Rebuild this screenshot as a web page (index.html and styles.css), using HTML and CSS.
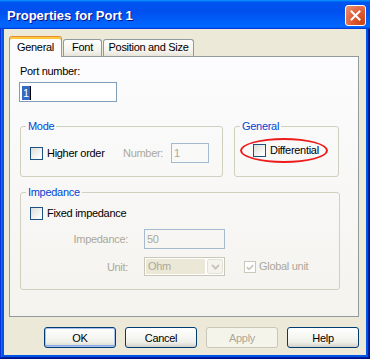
FILE: index.html
```html
<!DOCTYPE html>
<html lang="en">
<head>
    <meta charset="UTF-8">
    <title>Properties for Port 1</title>
    <link rel="stylesheet" href="styles.css">
</head>
<body>
    <div class="window">
        <div class="titlebar">
            <span class="title">Properties for Port 1</span>
            <span class="close">
                <svg width="19" height="19" viewBox="0 0 19 19">
                    <path d="M5.5 5.5 L13.5 13.5 M13.5 5.5 L5.5 13.5" stroke="#fff" stroke-width="2" stroke-linecap="square"/>
                </svg>
            </span>
        </div>

        <div class="client">
            <div class="tabs">
                <div class="tab active">General</div>
                <div class="tab tab-font">Font</div>
                <div class="tab tab-pos">Position and Size</div>
            </div>

            <div class="page">
                <div class="field-label">Port number:</div>
                <div class="edit port"><span class="sel">1</span></div>

                <div class="groups">
                    <fieldset class="group mode">
                        <legend>Mode</legend>
                        <div class="row">
                            <label class="check order"><span class="box"></span>Higher order</label>
                            <span class="muted num-label">Number:</span>
                            <div class="edit disabled num">1</div>
                        </div>
                    </fieldset>

                    <fieldset class="group general">
                        <legend>General</legend>
                        <div class="row diff">
                            <label class="check"><span class="box"></span>Differential</label>
                            <span class="ring"></span>
                        </div>
                    </fieldset>
                </div>

                <fieldset class="group impedance">
                    <legend>Impedance</legend>
                    <label class="check fixed"><span class="box"></span>Fixed impedance</label>
                    <div class="imp-grid">
                        <span class="muted right">Impedance:</span>
                        <div class="edit disabled">50</div>
                        <span></span>

                        <span class="muted right">Unit:</span>
                        <div class="combo">
                            <span class="combo-value">Ohm</span>
                            <span class="combo-btn">
                                <svg width="9" height="6" viewBox="0 0 9 6">
                                    <path d="M1 1 L4.5 4.5 L8 1" fill="none" stroke="#c9c7ba" stroke-width="2"/>
                                </svg>
                            </span>
                        </div>
                        <label class="check disabled global">
                            <span class="box">
                                <svg width="11" height="11" viewBox="0 0 11 11">
                                    <path d="M2 5 L4.5 7.5 L9 3" fill="none" stroke="#c9c7ba" stroke-width="2"/>
                                </svg>
                            </span>Global unit
                        </label>
                    </div>
                </fieldset>
            </div>

            <div class="buttons">
                <button class="btn default">OK</button>
                <button class="btn">Cancel</button>
                <button class="btn" disabled>Apply</button>
                <button class="btn">Help</button>
            </div>
        </div>
    </div>
</body>
</html>
```

FILE: styles.css
```css
body {
    margin: 0;
    font-family: "Liberation Sans", Arial, sans-serif;
    font-size: 11px;
    letter-spacing: -0.3px;
    color: #000;
}
.window {
    width: 370px;
    height: 359px;
    display: flex;
    flex-direction: column;
    background: #0055e5;
    box-shadow: inset -1px -1px #00138c, inset 1px 1px #0831d9, inset -2px -2px #001ea0, inset 2px 2px #166aee;
}
.titlebar {
    height: 29px;
    box-sizing: border-box;
    padding: 5px 4px 0 7px;
    display: flex;
    align-items: flex-start;
    background: linear-gradient(180deg, #0997ff, #0053ee 8%, #0050ee 40%, #0066ff 88%, #0066ff 93%, #005bff 95%, #003dd7 96%, #003dd7);
}
.title {
    font-weight: bold;
    font-size: 13px;
    line-height: 21px;
    letter-spacing: 0;
    color: #fff;
    text-shadow: 1px 1px #0f1089;
}
.close {
    margin-left: auto;
    width: 21px;
    height: 21px;
    box-sizing: border-box;
    border: 1px solid #fff;
    border-radius: 3px;
    background: radial-gradient(circle at 85% 85%, #cc4616 0%, #df5a32 45%, #ee9477 100%);
    display: flex;
}
.client {
    flex: 1;
    margin: 0 4px 4px;
    padding: 7px 7px 7px 5px;
    background: #ece9d8;
    display: flex;
    flex-direction: column;
}

/* tabs */
.tabs {
    height: 20px;
    display: flex;
    align-items: flex-end;
    position: relative;
    z-index: 1;
}
.tab {
    box-sizing: border-box;
    height: 17px;
    padding-top: 1px;
    line-height: 13px;
    text-align: center;
    border: 1px solid #919b9c;
    border-bottom: none;
    border-radius: 3px 3px 0 0;
    background: linear-gradient(#ffffff, #f3f2ec 70%, #e6e4d9);
}
.tab.active {
    width: 53px;
    height: 21px;
    margin-bottom: -1px;
    padding-top: 4px;
    border-top: 1px solid #e68b2c;
    box-shadow: inset 0 2px #ffc73c;
    background: #fcfcfe;
}
.tab-font {
    width: 39px;
    margin-left: 1px;
}
.tab-pos {
    width: 91px;
    margin-left: 1px;
}
.page {
    height: 261px;
    box-sizing: border-box;
    border: 1px solid #919b9c;
    padding: 8px 0 0 10px;
    background: linear-gradient(#fcfcfe, #f4f3ee);
}
.field-label {
    line-height: 13px;
}

/* edits */
.edit {
    box-sizing: border-box;
    height: 20px;
    border: 1px solid #7f9db9;
    background: #fff;
    padding: 0 2px;
    line-height: 18px;
}
.edit.port {
    width: 98px;
    margin: 4px 0 0 -1px;
}
.sel {
    display: inline-block;
    line-height: 14px;
    padding: 0 1px;
    background: #316ac5;
    color: #fff;
    border-right: 1px solid #000;
    vertical-align: middle;
}
.edit.disabled {
    background: transparent;
    color: #aca899;
    border-color: #a5b9cf;
}
.muted {
    color: #aca899;
}
.right {
    text-align: right;
}

/* group boxes */
.groups {
    display: flex;
    gap: 11px;
    margin-top: 18px;
}
.group {
    margin: 0;
    min-width: 0;
    box-sizing: border-box;
    border: 1px solid #d0d0bf;
    border-radius: 3px;
    padding: 10px 0 13px 5px;
}
.group legend {
    padding: 0 2px;
    line-height: 13px;
    color: #0046d5;
}
.mode {
    width: 203px;
}
.general {
    width: 105px;
    padding-top: 9px;
}
.row {
    display: flex;
    align-items: center;
    height: 20px;
    margin-left: 4px;
}
.row.diff {
    height: 17px;
    margin-left: 13px;
    position: relative;
}
.check {
    display: flex;
    align-items: center;
    gap: 4px;
    line-height: 13px;
}
.box {
    width: 13px;
    height: 13px;
    box-sizing: border-box;
    border: 1px solid #1c5180;
    background: linear-gradient(135deg, #dcdcd7, #ffffff 90%);
    display: flex;
}
.check.order {
    width: 93px;
}
.num-label {
    width: 48px;
}
.edit.num {
    width: 38px;
}
.ring {
    position: absolute;
    left: -13px;
    top: -4px;
    width: 88px;
    height: 25px;
    box-sizing: border-box;
    border: 2px solid #ee1b1b;
    border-radius: 50%;
}
.impedance {
    width: 320px;
    margin-top: 9px;
    padding-top: 8px;
}
.check.fixed {
    margin-left: 4px;
}
.imp-grid {
    display: grid;
    grid-template-columns: 102px 81px auto;
    grid-template-rows: 20px 19px;
    column-gap: 16px;
    row-gap: 8px;
    align-items: center;
    margin-top: 9px;
}
.combo {
    height: 19px;
    box-sizing: border-box;
    border: 1px solid #c9c7ba;
    padding: 1px;
    display: flex;
    gap: 2px;
    background: #fff;
}
.combo-value {
    flex: 1;
    background: #ebe8d7;
    color: #aca899;
    padding-left: 2px;
    line-height: 15px;
}
.combo-btn {
    width: 16px;
    box-sizing: border-box;
    border: 1px solid #e3e1d6;
    border-radius: 2px;
    background: #f4f3ee;
    display: flex;
    align-items: center;
    justify-content: center;
}
.check.disabled {
    color: #aca899;
    margin-left: 3px;
    gap: 3px;
}
.check.disabled .box {
    width: 12px;
    height: 12px;
    border-color: #cac8bb;
    background: #fff;
}

/* buttons */
.buttons {
    display: flex;
    justify-content: flex-end;
    gap: 9px;
    margin-top: 10px;
}
.btn {
    width: 72px;
    height: 21px;
    padding: 0;
    font-family: inherit;
    font-size: 11px;
    letter-spacing: -0.3px;
    color: #000;
    border: 1px solid #003c74;
    border-radius: 3px;
    background: linear-gradient(#ffffff, #f0f0ea 75%, #d6d0c5);
}
.btn.default {
    box-shadow: inset 0 0 0 1px #a8c2f0, inset 0 -2px #8eaae8;
}
.btn:disabled {
    color: #aca899;
    border-color: #c9c7ba;
    background: #f5f4ea;
}
```
